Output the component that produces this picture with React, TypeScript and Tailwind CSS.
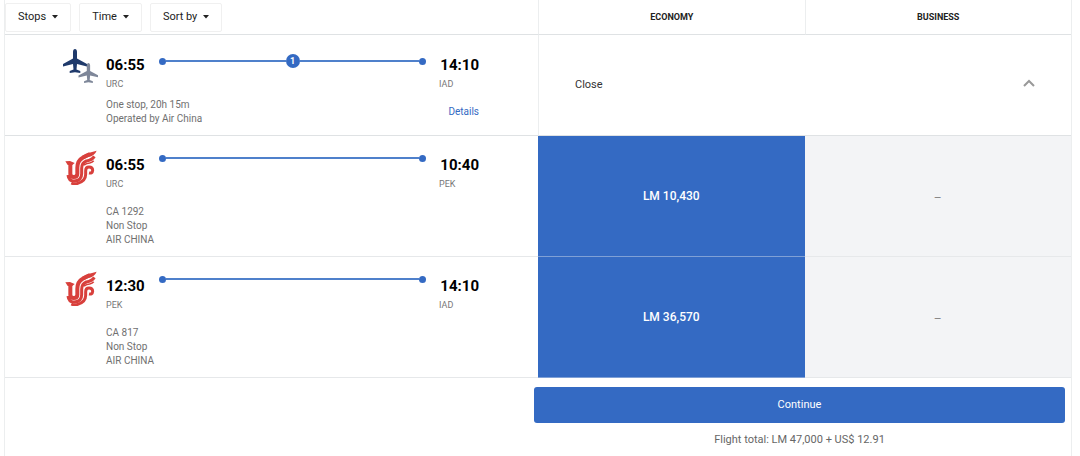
import { clsx } from "clsx";

type Leg = {
  from: string;
  departs: string;
  to: string;
  arrives: string;
  details: string[];
  price: string;
};

const FILTERS = ["Stops", "Time", "Sort by"];

const LEGS: Leg[] = [
  {
    from: "URC",
    departs: "06:55",
    to: "PEK",
    arrives: "10:40",
    details: ["CA 1292", "Non Stop", "AIR CHINA"],
    price: "LM 10,430",
  },
  {
    from: "PEK",
    departs: "12:30",
    to: "IAD",
    arrives: "14:10",
    details: ["CA 817", "Non Stop", "AIR CHINA"],
    price: "LM 36,570",
  },
];

const PLANE =
  "M12 0c1.200 0 2 1.300 2 3v6.500L24 15v2.400l-10-2.300-.5 5.500 3.800 1.500V24l-5.300-.8L6.700 24v-1.900l3.800-1.500-.5-5.500L0 17.400V15l10-5.500V3c0-1.700.8-3 2-3z";

function PlanesIcon() {
  return (
    <svg viewBox="0 0 36 36" className="size-9" aria-hidden="true">
      <path d={PLANE} transform="translate(1 1)" fill="#1f3a6b" />
      <path d={PLANE} transform="translate(16.500 15) scale(.83)" fill="#7e8799" />
    </svg>
  );
}

function AirChinaLogo() {
  return (
    <svg viewBox="0 0 108 108" className="size-9" fill="none" stroke="#d8403c" aria-label="Air China" role="img">
      <path d="M10 37 24 36 38 42 31 48H17z" fill="#d8403c" stroke="none" />
      <path d="M25 42V74Q25 84 35 84Q46 84 46 74V56Q46 35 62 26Q72 20 84 15" strokeWidth="12" />
      <path d="M60 21Q78 10 104 5Q98 20 80 24L66 30z" fill="#d8403c" stroke="none" />
      <path d="M18 78Q20 96 36 96Q59 95 59 74V58Q59 42 73 36Q90 33 97 22" strokeWidth="9" />
      <path d="M28 102Q34 105 44 104Q71 98 71 76V65Q71 54 81 54Q92 54 92 64Q91 74 81 72" strokeWidth="9" />
      <path d="M66 48Q74 43 83 42Q91 40 95 35" strokeWidth="5" />
    </svg>
  );
}

function Timeline({ stops }: { stops?: number }) {
  return (
    <div className="mx-3.5 flex flex-1 items-center">
      <span className="size-[7px] rounded-full bg-[#346ac3]" />
      <span className="h-0.5 flex-1 bg-[#4f80cb]" />
      {stops && (
        <>
          <span className="flex size-3.5 items-center justify-center rounded-full bg-[#346ac3] text-[9px] font-bold text-white">
            {stops}
          </span>
          <span className="h-0.5 flex-1 bg-[#4f80cb]" />
        </>
      )}
      <span className="size-[7px] rounded-full bg-[#346ac3]" />
    </div>
  );
}

type RouteProps = Pick<Leg, "from" | "departs" | "to" | "arrives"> & { stops?: number };

function Route({ from, departs, to, arrives, stops }: RouteProps) {
  return (
    <>
      <div className="flex items-start text-[15px] leading-5 font-bold text-black">
        <time>{departs}</time>
        <div className={clsx("flex flex-1", stops ? "h-3" : "h-1.5")}>
          <Timeline stops={stops} />
        </div>
        <time>{arrives}</time>
      </div>
      <div className="mt-0.5 flex justify-between text-[9px] leading-3.5 text-[#777]">
        <span>{from}</span>
        <span className="w-10">{to}</span>
      </div>
    </>
  );
}

export default function App() {
  return (
    <main className="mr-2 ml-1 border-x border-[#eceeef] bg-white font-['Roboto','Liberation_Sans',sans-serif] text-[#333]">
      <table className="w-full table-fixed border-separate border-spacing-0">
        <thead>
          <tr className="h-[35px] text-[9px] font-bold text-[#222]">
            <th scope="col" aria-label="Flights" className="w-1/2 border-b border-[#dfe2e4] p-0 font-normal">
              <div className="flex gap-2">
                {FILTERS.map((filter) => (
                  <button
                    key={filter}
                    type="button"
                    className="flex h-[29px] items-center gap-1.5 rounded-xs border border-[#f0f0f0] px-3 text-[11px]"
                  >
                    {filter}
                    <svg viewBox="0 0 6 4" className="w-1.5" aria-hidden="true">
                      <path d="M0 0h6L3 3.500z" fill="currentColor" />
                    </svg>
                  </button>
                ))}
              </div>
            </th>
            <th scope="col" className="w-1/4 border-b border-l border-[#dfe2e4] border-l-[#eceeef] p-0 pt-0.5">
              ECONOMY
            </th>
            <th scope="col" className="w-1/4 border-b border-l border-[#dfe2e4] border-l-[#eceeef] p-0 pt-0.5">
              BUSINESS
            </th>
          </tr>
        </thead>
        <tbody>
          <tr className="h-[101px]">
            <td className="border-b border-[#dfe2e4] p-0 align-top">
              <div className="flex gap-2 pt-[13px] pr-[59px] pl-[57px]">
                <PlanesIcon />
                <div className="flex-1 pt-[7px]">
                  <Route from="URC" departs="06:55" to="IAD" arrives="14:10" stops={1} />
                  <div className="mt-[7px] flex items-center justify-between text-[10px] leading-3.5 text-[#707070]">
                    <p>
                      One stop, 20h 15m
                      <br />
                      Operated by Air China
                    </p>
                    <a href="#details" className="text-[#346ac3]">
                      Details
                    </a>
                  </div>
                </div>
              </div>
            </td>
            <td colSpan={2} className="border-b border-l border-[#dfe2e4] border-l-[#eceeef] p-0">
              <button type="button" className="flex w-full items-center justify-between px-9 text-[11px]">
                Close
                <svg viewBox="0 0 12 8" className="mb-1 w-3" fill="none" stroke="#999" strokeWidth="2" aria-hidden="true">
                  <path d="m1 7 5-5 5 5" />
                </svg>
              </button>
            </td>
          </tr>
          {LEGS.map((leg) => (
            <tr key={leg.from} className="h-[121px]">
              <td className="border-b border-[#e6e8ea] p-0 align-top">
                <div className="flex gap-2 pt-[13px] pr-[59px] pl-[57px]">
                  <AirChinaLogo />
                  <div className="flex-1 pt-1.5">
                    <Route from={leg.from} departs={leg.departs} to={leg.to} arrives={leg.arrives} />
                    <ul className="mt-3.5 text-[10px] leading-3.5 text-[#707070]">
                      {leg.details.map((line) => (
                        <li key={line}>{line}</li>
                      ))}
                    </ul>
                  </div>
                </div>
              </td>
              <td className="border-b border-[#7fa0d6] bg-[#346ac3] p-0">
                <button type="button" className="h-[120px] w-full text-[12px] font-medium text-white">
                  {leg.price}
                </button>
              </td>
              <td className="border-b border-[#e6e8ea] bg-[#f3f4f6] p-0 pt-1 text-center text-[12px] text-[#888]">–</td>
            </tr>
          ))}
        </tbody>
      </table>
      <div className="ml-[50%] pt-[9px] pr-1.5 pb-2 text-[11px] text-[#666]">
        <div className="-ml-1 text-center">
          <button type="button" className="h-9 w-full rounded-[3px] bg-[#346ac3] text-white">
            Continue
          </button>
          <p className="mt-[9px]">Flight total: LM 47,000 + US$ 12.91</p>
        </div>
      </div>
    </main>
  );
}
